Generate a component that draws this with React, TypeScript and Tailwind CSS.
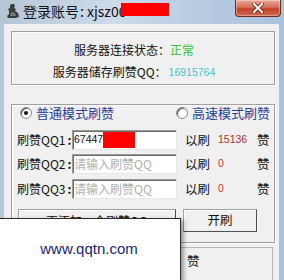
import React from "react";

const cjk = "font-['Noto_Sans_CJK_SC','Noto_Sans',sans-serif]";
const lat = "font-['Liberation_Sans',Arial,sans-serif]";

function Radio({ checked }: { checked?: boolean }) {
  return (
    <span className="relative inline-block w-[12px] h-[12px] rounded-full bg-white border border-[#8a8a8a] shadow-[inset_1px_1px_0_#5a5a5a] shrink-0">
      {checked && (
        <span className="absolute left-[3px] top-[3px] w-[4px] h-[4px] rounded-full bg-[#111]" />
      )}
    </span>
  );
}

function Row({
  label,
  value,
  count,
  countColor,
}: {
  label: string;
  value?: React.ReactNode;
  count: string;
  countColor: string;
}) {
  return (
    <div className="flex items-center h-[20px]">
      <div className={`w-[55px] flex items-center text-[12px] text-[#111] whitespace-nowrap ${cjk}`}>
        <span>{label}</span>
        <span className="ml-[2px] font-bold">:</span>
      </div>
      <div className="w-[105px] h-[20px] bg-white border border-t-[#9a9a9a] border-l-[#9a9a9a] border-r-[#e6e6e6] border-b-[#e6e6e6] shadow-[inset_1px_1px_0_#6c6c6c] flex items-center pl-[1px] overflow-hidden">
        {value}
      </div>
      <div className={`ml-[8px] w-[25px] text-[12.5px] text-[#111] ${cjk}`}>以刷</div>
      <div className={`ml-[8px] w-[39px] text-[10.5px] ${lat}`} style={{ color: countColor }}>
        {count}
      </div>
      <div className={`text-[12.5px] text-[#111] ${cjk}`}>赞</div>
    </div>
  );
}

export default function App() {
  return (
    <div className="relative w-[284px] h-[280px] overflow-hidden flex flex-col bg-[linear-gradient(90deg,#b7c6d6,#cddaea_40%,#b8cce1_70%,#a9c2dd)]">
      {/* Title bar */}
      <div className="h-[24px] flex items-start shrink-0">
        <div className="flex items-center h-[22px] flex-1">
          <svg width="14" height="16" viewBox="0 0 14 16" className="ml-[6px]">
            <path
              d="M5 1 L8 1 L9 3 L8 5 L10 6 L9 8 L12 10 L13 14 L9 15 L2 15 L1 13 L3 11 L3 8 L2 6 L4 5 L4 3 Z"
              fill="#3b3b3b"
            />
            <path d="M5 9 L9 10 L10 13 L4 13 Z" fill="#7a7a7a" />
          </svg>
          <span className={`ml-[3px] text-[14px] text-[#111] whitespace-nowrap ${cjk}`}>登录账号</span>
          <span className={`text-[14px] text-[#111] ml-[1px] ${cjk}`}>:</span>
          <span className={`ml-[3px] text-[14px] text-[#111] ${cjk}`}>xjsz00</span>
          <span className="ml-[-5px] w-[48px] h-[13px] bg-[#ff0000] mt-[-3px]" />
        </div>
        <div className="mr-[3px] w-[46px] h-[17px] rounded-b-[4px] border border-t-0 border-[#6e2a1e] bg-[linear-gradient(180deg,#e8a898_0%,#d6705a_45%,#c2412b_55%,#cf6a4f_100%)] flex items-center justify-center shadow-[inset_0_0_0_1px_rgba(255,255,255,0.35)]">
          <svg width="12" height="10" viewBox="0 0 12 10">
            <path d="M2 1 L10 9 M10 1 L2 9" stroke="#5a2418" strokeWidth="3.6" strokeLinecap="square" />
            <path d="M2 1 L10 9 M10 1 L2 9" stroke="#ffffff" strokeWidth="2" strokeLinecap="square" />
          </svg>
        </div>
      </div>

      {/* Body */}
      <div className="flex-1 ml-[4px] mr-[5px] bg-[#f0f0f0] flex flex-col pl-[7px] pr-[4px] pt-[7px]">
        {/* Group box 1 */}
        <div className="h-[54px] border border-[#a0a0a0] shadow-[inset_1px_1px_0_#fff,1px_1px_0_#fff] flex flex-col items-center pt-[10px] gap-[6px] pr-[18px]">
          <div className={`h-[16px] leading-[16px] text-[12px] text-[#111] whitespace-nowrap ${cjk}`}>
            服务器连接状态：<span className="text-[#2ec22e]">正常</span>
          </div>
          <div className={`h-[16px] leading-[16px] text-[12px] text-[#111] whitespace-nowrap flex items-center ${cjk}`}>
            服务器储存刷赞QQ：
            <span className={`ml-[2px] text-[10.5px] text-[#3cc6d6] ${lat}`}>16915764</span>
          </div>
        </div>

        {/* Group box 2 */}
        <div className="mt-[19px] h-[139px] border border-[#a0a0a0] shadow-[inset_1px_1px_0_#fff,1px_1px_0_#fff] flex flex-col pl-[5px]">
          <div className="h-[16px] flex items-center">
            <span className="ml-[3px]">
              <Radio checked />
            </span>
            <span className={`ml-[4px] text-[13px] text-[#24409c] whitespace-nowrap ${cjk}`}>普通模式刷赞</span>
            <span className="ml-[62px]">
              <Radio />
            </span>
            <span className={`ml-[4px] text-[13px] text-[#24409c] whitespace-nowrap ${cjk}`}>高速模式刷赞</span>
          </div>
          <div className="mt-[9px] flex flex-col gap-[4px]">
            <Row
              label="刷赞QQ1"
              count="15136"
              countColor="#a83434"
              value={
                <div className="flex items-center">
                  <span className={`text-[10.5px] text-[#111] ${lat}`}>67447</span>
                  <span className="w-[32px] h-[16px] bg-[#ff0000]" />
                </div>
              }
            />
            <Row
              label="刷赞QQ2"
              count="0"
              countColor="#d03030"
              value={<span className={`text-[12px] text-[#b0b0b0] whitespace-nowrap ${cjk}`}>请输入刷赞QQ</span>}
            />
            <div className="mt-[1px]">
              <Row
                label="刷赞QQ3"
                count="0"
                countColor="#d03030"
                value={<span className={`text-[12px] text-[#b0b0b0] whitespace-nowrap ${cjk}`}>请输入刷赞QQ</span>}
              />
            </div>
          </div>
          <div className="mt-[10px] flex items-start pl-[1px]">
            <div className={`w-[158px] h-[23px] bg-[#f0f0f0] border border-[#a0a0a0] border-b-[#505050] border-r-[#505050] shadow-[inset_1px_1px_0_#fff] flex items-center justify-center text-[12px] text-[#111] ${cjk}`}>
              再添加一个刷赞QQ
            </div>
            <div className={`ml-[7px] w-[74px] h-[23px] bg-[#f0f0f0] border border-[#a0a0a0] border-b-[#505050] border-r-[#505050] shadow-[inset_1px_1px_0_#fff] flex items-center justify-center text-[12.5px] text-[#111] ${cjk}`}>
              开刷
            </div>
          </div>
        </div>

        {/* Bottom box */}
        <div className="mt-[4px] ml-[7px] mr-[2px] h-[40px] border border-[#b8b8b8] flex items-start">
          <div className="w-[168px]" />
          <span className={`mt-[4px] text-[12.5px] text-[#111] ${cjk}`}>赞</span>
        </div>
      </div>

      {/* Watermark overlay */}
      <div className="absolute left-0 top-[218px] w-[181px] h-[62px] bg-white border-t border-r border-[#2a2a2a] shadow-[3px_2px_4px_rgba(0,0,0,0.35)] flex items-center justify-center pr-[2px]">
        <span className={`text-[15px] text-[#20246e] ${lat}`}>www.qqtn.com</span>
      </div>
    </div>
  );
}
